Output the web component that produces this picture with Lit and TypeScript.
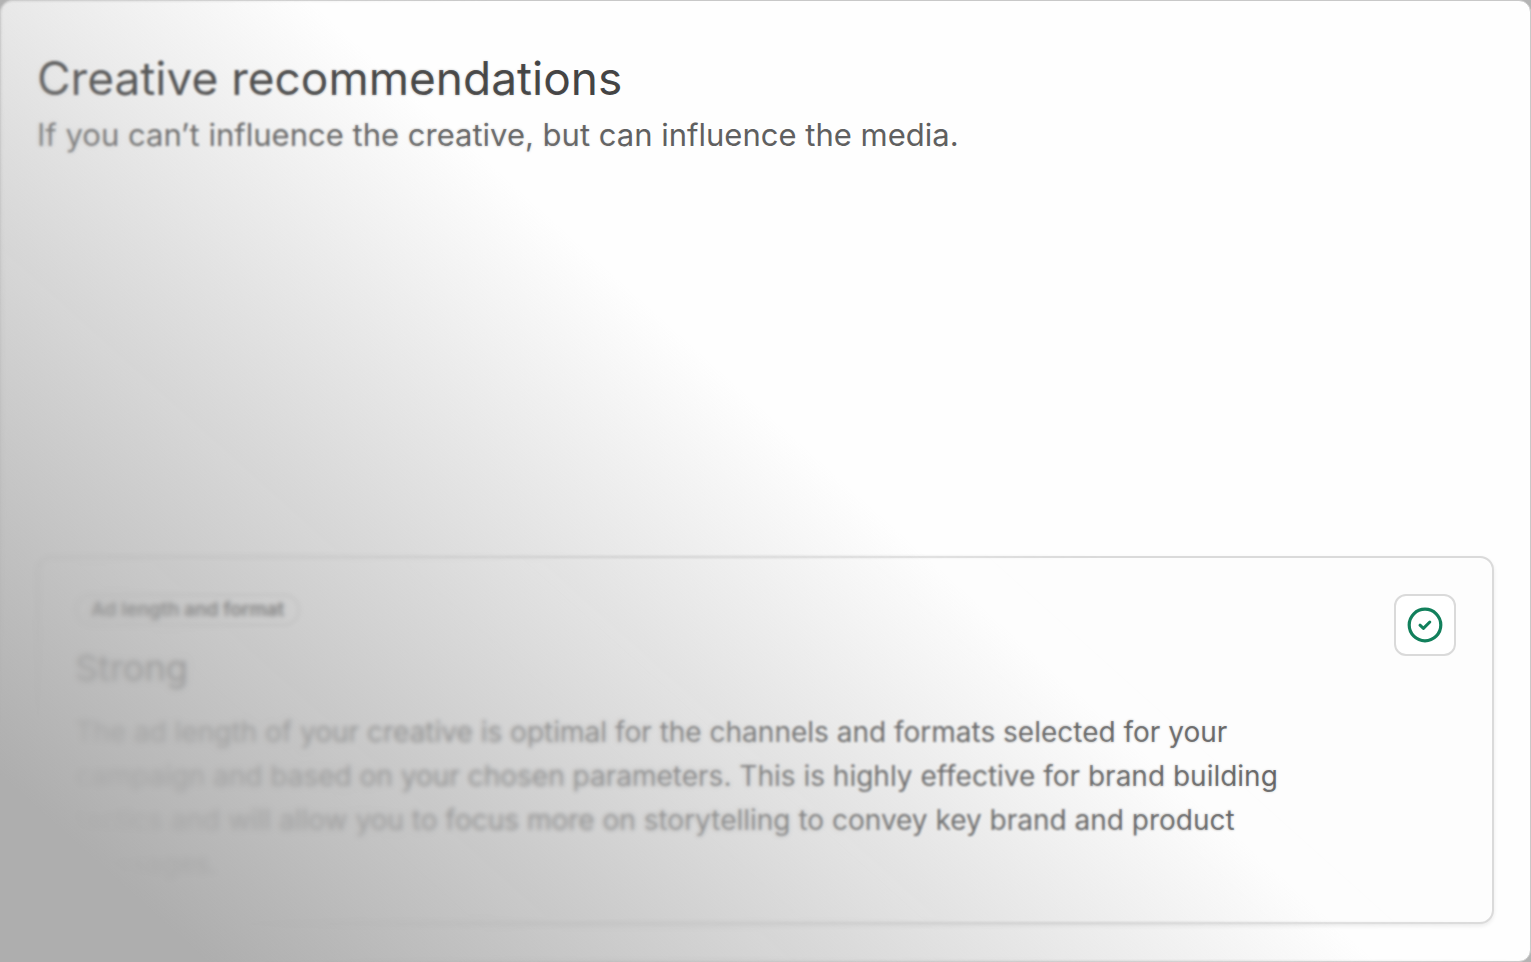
import { LitElement, html, css } from "lit";
import { customElement, property } from "lit/decorators.js";

@customElement("recommendation-card")
export class RecommendationCard extends LitElement {
  static styles = css`
    :host {
      display: block;
    }
    .card {
      display: flex;
      align-items: flex-start;
      justify-content: space-between;
      gap: 36px;
      box-sizing: border-box;
      padding: 36px;
      border: 2px solid #dadada;
      border-radius: 14px;
      background: #fdfdfd;
      box-shadow: 0 2px 4px rgba(0, 0, 0, 0.08);
    }
    .content {
      display: flex;
      flex-direction: column;
      align-items: flex-start;
      min-width: 0;
    }
    .tag {
      padding: 0 14px;
      border: 2px solid #dadada;
      border-radius: 16px;
      font-size: 19px;
      line-height: 28px;
      font-weight: 600;
      color: #333;
    }
    .title {
      margin: 16px 0;
      font-size: 36px;
      line-height: 52px;
      font-weight: 400;
      color: #4a4a4a;
    }
    .text {
      margin: 0;
      font-size: 28px;
      line-height: 44px;
      color: #606060;
    }
    .status {
      flex: none;
      display: grid;
      place-items: center;
      width: 62px;
      height: 62px;
      border: 2px solid #dadada;
      border-radius: 12px;
      padding: 0;
      background: #fff;
      color: #12805c;
    }
    .status svg {
      display: block;
      width: 36px;
      height: 36px;
    }
  `;

  @property() tag = "";
  @property() heading = "";
  @property() text = "";

  render() {
    return html`
      <article class="card">
        <div class="content">
          <span class="tag">${this.tag}</span>
          <h2 class="title">${this.heading}</h2>
          <p class="text">${this.text}</p>
        </div>
        <button class="status" type="button" aria-label="Passed">
          <svg viewBox="0 0 36 36" fill="none" stroke="currentColor" aria-hidden="true">
            <circle cx="18" cy="18" r="15.8" stroke-width="3.2" />
            <path
              d="M13 18.2l3.4 3.2 6.4-6.4"
              stroke-width="3"
              stroke-linecap="round"
              stroke-linejoin="round"
            />
          </svg>
        </button>
      </article>
    `;
  }
}

@customElement("app-root")
export class AppRoot extends LitElement {
  static styles = css`
    :host {
      display: block;
      position: relative;
      background: #b4b4b4;
      font-family: Inter, "Liberation Sans", sans-serif;
      overflow: hidden;
    }
    .panel {
      display: flex;
      flex-direction: column;
      justify-content: space-between;
      box-sizing: border-box;
      min-height: 100vh;
      padding: 49px 36px 37px;
      border: 1px solid #c8c8c8;
      border-radius: 12px;
      background: #fefefe;
    }
    .heading {
      margin: 0;
      font-size: 46px;
      line-height: 56px;
      font-weight: 400;
      color: #444;
    }
    .subheading {
      margin: 8px 0 0;
      font-size: 31px;
      line-height: 42px;
      color: #606060;
    }
    .haze,
    .blur {
      position: absolute;
      inset: 0;
      pointer-events: none;
    }
    .haze {
      background: linear-gradient(42deg, #aeaeae 8%, rgba(174, 174, 174, 0) 53%);
    }
    .soft {
      backdrop-filter: blur(1px);
      mask-image: linear-gradient(42deg, #000 46%, transparent 60%);
    }
    .medium {
      backdrop-filter: blur(2px);
      mask-image: linear-gradient(42deg, #000 28%, transparent 42%);
    }
    .strong {
      backdrop-filter: blur(3px);
      mask-image: linear-gradient(42deg, #000 12%, transparent 24%);
    }
  `;

  render() {
    return html`
      <main class="panel">
        <header>
          <h1 class="heading">Creative recommendations</h1>
          <p class="subheading">
            If you can’t influence the creative, but can influence the media.
          </p>
        </header>
        <recommendation-card
          tag="Ad length and format"
          heading="Strong"
          text="The ad length of your creative is optimal for the channels and formats selected for your campaign and based on your chosen parameters. This is highly effective for brand building tactics and will allow you to focus more on storytelling to convey key brand and product messages."
        ></recommendation-card>
      </main>
      <div class="blur soft"></div>
      <div class="blur medium"></div>
      <div class="blur strong"></div>
      <div class="haze"></div>
    `;
  }
}
